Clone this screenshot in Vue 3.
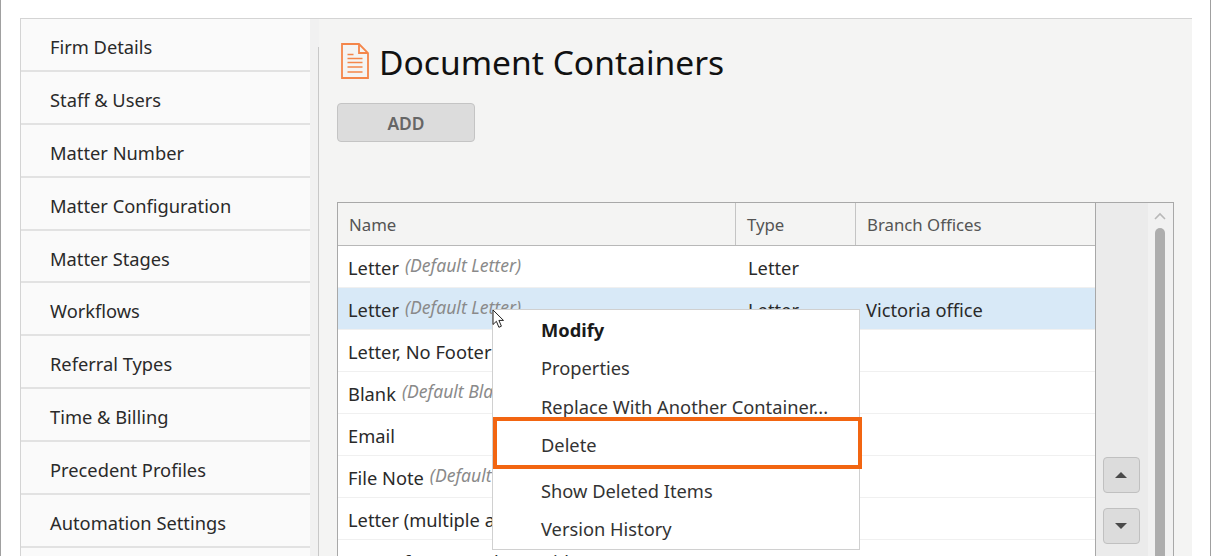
<script setup>
const navItems = ['Firm Details', 'Staff & Users', 'Matter Number', 'Matter Configuration', 'Matter Stages', 'Workflows', 'Referral Types', 'Time & Billing', 'Precedent Profiles', 'Automation Settings']
const rows = [
  { name: 'Letter', note: '(Default Letter)', type: 'Letter', office: '' },
  { name: 'Letter', note: '(Default Letter)', type: 'Letter', office: 'Victoria office', selected: true },
  { name: 'Letter, No Footer', note: '', type: '', office: '' },
  { name: 'Blank', note: '(Default Blank)', type: '', office: '' },
  { name: 'Email', note: '', type: '', office: '' },
  { name: 'File Note', note: '(Default File Note)', type: '', office: '' },
  { name: 'Letter (multiple addressees)', note: '', type: '', office: '' },
  { name: 'Letter for general use without a matter', note: '', type: 'Letter', office: '' }
]
</script>

<template>
  <div class="page">
    <div class="frame">
      <nav class="nav">
        <div v-for="item in navItems" :key="item" class="nav-item">{{ item }}</div>
      </nav>
      <div class="gutter"></div>
      <main class="main">
        <header class="title">
          <svg class="doc-icon" width="28" height="36" viewBox="0 0 28 36" fill="none" stroke="#f4864a" stroke-width="1.8">
            <path d="M1 1H18L27 10V35H1Z" />
            <path d="M18 1V10H27" />
            <path d="M6.5 11.5H12.5M6.5 15.5H21.5M6.5 19.5H21.5M6.5 24H21.5M6.5 29H21.5" stroke-width="1.6" />
          </svg>
          <h1>Document Containers</h1>
        </header>
        <button class="add">ADD</button>
        <section class="panel">
          <div class="grid">
            <div class="row head">
              <div class="c1">Name</div>
              <div class="c2">Type</div>
              <div class="c3">Branch Offices</div>
            </div>
            <div v-for="(r, i) in rows" :key="i" class="row" :class="{ selected: r.selected }">
              <div class="c1"><span>{{ r.name }}</span><em v-if="r.note">{{ r.note }}</em></div>
              <div class="c2">{{ r.type }}</div>
              <div class="c3">{{ r.office }}</div>
            </div>
          </div>
          <div class="side">
            <div class="movers">
              <button class="mover"><i class="up"></i></button>
              <button class="mover"><i class="down"></i></button>
            </div>
            <div class="scroll">
              <svg class="chev" width="14" height="8" viewBox="0 0 14 8" fill="none" stroke="#b8b8b8" stroke-width="1.6"><path d="M2 7L7 2L12 7" /></svg>
              <div class="thumb"></div>
            </div>
          </div>
          <div class="menu">
            <div class="mi strong">Modify</div>
            <div class="mi">Properties</div>
            <div class="mi">Replace With Another Container...</div>
            <div class="mi">Delete</div>
            <div class="sep"></div>
            <div class="mi">Show Deleted Items</div>
            <div class="mi">Version History</div>
          </div>
          <div class="highlight"></div>
          <svg class="cursor" width="13" height="20" viewBox="0 0 13 20">
            <path d="M1 1V15.5L4.4 12.3L6.9 18.3L9.4 17.2L6.9 11.4H11.5Z" fill="#fff" stroke="#222" stroke-width="1" stroke-linejoin="round" />
          </svg>
        </section>
      </main>
    </div>
    <div class="edge-left"></div>
    <div class="edge-right"></div>
  </div>
</template>

<style>
html, body { margin: 0; height: 556px; overflow: hidden; background: #fff; }
</style>

<style scoped>
.page {
  position: relative;
  width: 1211px;
  height: 556px;
  overflow: hidden;
  padding: 18px 19px 0 20px;
  box-sizing: border-box;
  font-family: "Noto Sans", "Open Sans", sans-serif;
  font-size: 18.3px;
  color: #2a2a2a;
}
.edge-left { position: absolute; left: 0; top: 0; bottom: 0; width: 1px; background: #a0a0a0; }
.edge-right { position: absolute; right: 0; top: 0; bottom: 0; width: 1px; background: #a0a0a0; }
.frame {
  display: flex;
  height: 600px;
  background: #f4f4f3;
  border-top: 1px solid #d4d4d4;
  border-left: 1px solid #d4d4d4;
}
.nav { width: 289px; flex: none; background: #fafafa; }
.nav-item {
  height: 52.88px;
  box-sizing: border-box;
  line-height: 56px;
  padding-left: 29px;
  border-bottom: 2px solid #e2e2e2;
  white-space: nowrap;
}
.gutter { position: relative; width: 9px; flex: none; background: #f1f1f1; }
.gutter::after { content: ""; position: absolute; right: 0; top: 28px; bottom: 0; width: 1px; background: #c8c8c8; }
.main { flex: 1; min-width: 0; padding: 0 18px; }
.title { display: flex; align-items: center; height: 84px; padding: 4px 0 0 4px; box-sizing: border-box; }
.doc-icon { flex: none; margin-bottom: 4px; }
h1 { margin: 0 0 0 10px; font-size: 33.6px; font-weight: 400; color: #111; line-height: 1; }
.add {
  display: block;
  width: 138px;
  height: 39px;
  padding: 0;
  background: #dcdcdc;
  border: 1px solid #c4c4c4;
  border-radius: 4px;
  font: 600 17.4px "Noto Sans", sans-serif;
  color: #666;
}
.panel {
  position: relative;
  display: flex;
  margin-top: 60px;
  height: 380px;
  border: 1px solid #a8a8a8;
  box-sizing: content-box;
}
.grid { width: 757px; flex: none; background: #fff; border-right: 1px solid #a8a8a8; }
.row { display: flex; height: 41px; line-height: 44px; border-bottom: 1px solid #f0f0f0; white-space: nowrap; }
.row.head { height: 42px; line-height: 44px; background: #f4f4f3; border-bottom: 1px solid #b8b8b8; color: #555; font-size: 16.8px; }
.row.selected { background: #d8e9f7; }
.c1 { width: 398px; flex: none; padding-left: 10px; box-sizing: border-box; overflow: hidden; }
.c2 { width: 120px; flex: none; padding-left: 12px; box-sizing: border-box; }
.c3 { flex: 1; padding-left: 10px; box-sizing: border-box; }
.head .c1, .head .c2, .head .c3 { padding-left: 11px; }
.head .c1, .head .c2 { border-right: 1px solid #c4c4c4; }
.c1 em { margin-left: 6px; font-style: italic; color: #8a8a8a; font-size: 17.6px; position: relative; top: -3px; }
.side { flex: 1; display: flex; background: #ebebeb; }
.movers { width: 52px; flex: none; display: flex; flex-direction: column; align-items: center; gap: 15px; padding: 254px 2px 0 0; box-sizing: border-box; }
.mover { width: 37px; height: 36px; background: #dcdcdc; border: 1px solid #c0c0c0; border-radius: 4px; padding: 0; display: flex; align-items: center; justify-content: center; }
.up { width: 0; height: 0; border-left: 6px solid transparent; border-right: 6px solid transparent; border-bottom: 6px solid #4a4a4a; }
.down { width: 0; height: 0; border-left: 6px solid transparent; border-right: 6px solid transparent; border-top: 6px solid #4a4a4a; }
.scroll { flex: 1; background: #f1f1f1; position: relative; }
.chev { position: absolute; left: 5px; top: 9px; }
.thumb { position: absolute; left: 7px; top: 25px; width: 10px; height: 400px; border-radius: 5px 5px 0 0; background: #adadad; }
.menu {
  position: absolute;
  left: 154px;
  top: 106px;
  width: 368px;
  height: 241px;
  padding-top: 1px;
  background: #fff;
  border: 1px solid #d0d0d0;
  box-sizing: border-box;
}
.mi { height: 38.4px; line-height: 38.4px; padding-left: 48px; color: #333; white-space: nowrap; }
.mi.strong { font-weight: 700; color: #1a1a1a; }
.sep { height: 7.5px; }
.highlight {
  position: absolute;
  left: 155px;
  top: 214px;
  width: 369px;
  height: 52px;
  border: 4px solid #f26511;
  box-sizing: border-box;
}
.cursor { position: absolute; left: 154px; top: 106px; }
</style>
